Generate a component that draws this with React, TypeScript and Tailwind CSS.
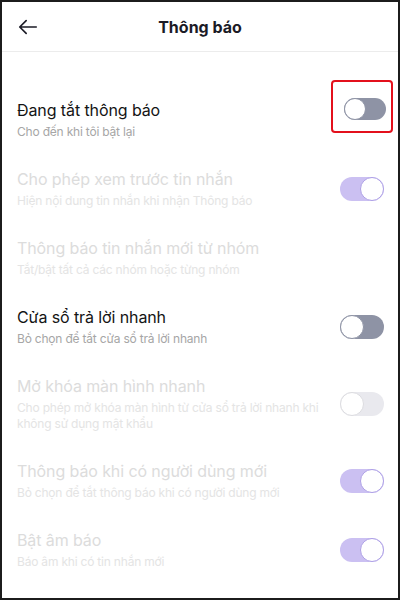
import React from 'react'

type Tone = 'dark' | 'light' | 'purple'

function Toggle({ tone, on, small }: { tone: Tone; on: boolean; small?: boolean }) {
  const track =
    tone === 'dark' ? 'bg-[#8e93a5]' : tone === 'light' ? 'bg-[#e9e9ee]' : 'bg-[#cbc0f2]'
  const knobBorder =
    tone === 'dark' ? 'border-[#8e93a5]' : tone === 'light' ? 'border-[#dcdce0]' : 'border-[#ad9fe6]'
  return (
    <div
      className={`${small ? 'w-[42px] h-[22px]' : 'w-[44px] h-[24px]'} rounded-full ${track} flex items-center ${
        on ? 'justify-end' : 'justify-start'
      }`}
    >
      <div
        className={`${small ? 'w-[22px] h-[22px]' : 'w-[24px] h-[24px]'} rounded-full bg-white border-[1.5px] ${knobBorder}`}
      />
    </div>
  )
}

type Row = {
  title: string
  sub: string[]
  disabled?: boolean
  toggle?: { tone: Tone; on: boolean }
}

const rows: Row[] = [
  { title: 'Cho phép xem trước tin nhắn', sub: ['Hiện nội dung tin nhắn khi nhận Thông báo'], disabled: true, toggle: { tone: 'purple', on: true } },
  { title: 'Thông báo tin nhắn mới từ nhóm', sub: ['Tắt/bật tất cả các nhóm hoặc từng nhóm'], disabled: true },
  { title: 'Cửa sổ trả lời nhanh', sub: ['Bỏ chọn để tắt cửa sổ trả lời nhanh'], toggle: { tone: 'dark', on: false } },
  {
    title: 'Mở khóa màn hình nhanh',
    sub: ['Cho phép mở khóa màn hình từ cửa sổ trả lời nhanh khi', 'không sử dụng mật khẩu'],
    disabled: true,
    toggle: { tone: 'light', on: false },
  },
  { title: 'Thông báo khi có người dùng mới', sub: ['Bỏ chọn để tắt thông báo khi có người dùng mới'], disabled: true, toggle: { tone: 'purple', on: true } },
  { title: 'Bật âm báo', sub: ['Báo âm khi có tin nhắn mới'], disabled: true, toggle: { tone: 'purple', on: true } },
]

export default function App() {
  return (
    <div
      className="w-[400px] h-[600px] bg-white border-2 border-[#1c1c1c] overflow-hidden flex flex-col"
      style={{ fontFamily: 'Inter, "Noto Sans", sans-serif' }}
    >
      {/* ── Header ───────────────────────────────────────────── */}
      <header className="shrink-0 h-[50px] border-b border-[#ececec] flex items-center relative">
        <svg viewBox="0 0 24 24" className="w-[22px] h-[22px] ml-[15px] text-[#1b1b26]" fill="none" stroke="currentColor" strokeWidth={1.8} strokeLinecap="round" strokeLinejoin="round">
          <path d="M21 12H3.5M10 5l-7 7 7 7" />
        </svg>
        <span className="absolute left-0 right-0 text-center text-[16px] font-bold text-[#1b1b26] pointer-events-none">
          Thông báo
        </span>
      </header>

      {/* ── Do-not-disturb row ───────────────────────────────── */}
      <div className="mt-[33px] flex items-start pl-[15px] pr-[12px] py-[14px]">
        <div className="flex-1 min-w-0">
          <div className="text-[16px] leading-[22px] text-[#141414] tracking-[-0.1px]">Đang tắt thông báo</div>
          <div className="mt-[3px] text-[12px] leading-[16px] text-[#a6a6a6] tracking-[-0.2px] whitespace-nowrap">Cho đến khi tôi bật lại</div>
        </div>
        <div className="relative mt-[-1px]">
          <Toggle tone="dark" on={false} small />
          <div className="absolute left-[-13px] right-[-7px] top-[-18px] bottom-[-13px] border-[2.5px] border-[#e3101c] rounded-[4px]" />
        </div>
      </div>

      {/* ── Settings rows ────────────────────────────────────── */}
      {rows.map(r => (
        <div key={r.title} className="flex items-center pl-[15px] pr-[14px] py-[14px]">
          <div className="flex-1 min-w-0">
            <div className={`text-[16px] leading-[22px] tracking-[-0.1px] ${r.disabled ? 'text-[#dcdcdc]' : 'text-[#141414]'}`}>{r.title}</div>
            <div className={`mt-[3px] text-[12px] leading-[16px] tracking-[-0.2px] whitespace-nowrap ${r.disabled ? 'text-[#e4e4e4]' : 'text-[#a6a6a6]'}`}>
              {r.sub.map(s => (
                <div key={s}>{s}</div>
              ))}
            </div>
          </div>
          {r.toggle && (
            <div className="shrink-0 ml-3">
              <Toggle tone={r.toggle.tone} on={r.toggle.on} />
            </div>
          )}
        </div>
      ))}
    </div>
  )
}
